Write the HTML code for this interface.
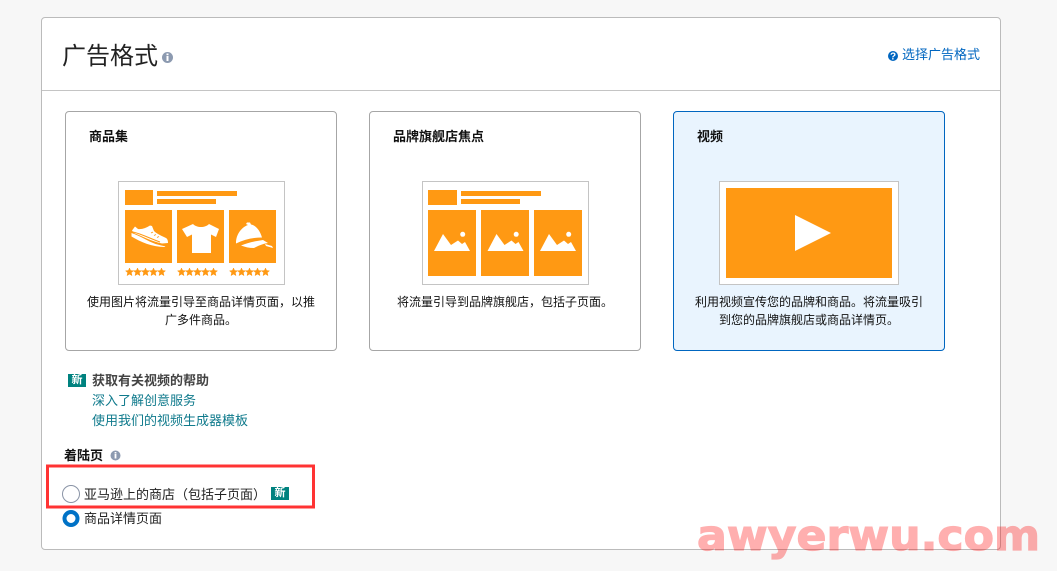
<!DOCTYPE html>
<html><head><meta charset="utf-8"><style>
html,body{margin:0;padding:0}
body{width:1057px;height:571px;background:#f7f7f7;position:relative;overflow:hidden;font-family:"Liberation Sans","Noto Sans CJK SC",sans-serif;color:#111;font-size:13px}
.a{position:absolute;white-space:nowrap}
.panel{left:41px;top:17px;width:958px;height:531px;background:#fff;border:1px solid #bbb;border-radius:4px}
.hr{left:42px;top:90px;width:958px;height:1px;background:#c4c4c4}
.card{top:111px;width:270px;height:238px;background:#fff;border:1px solid #a6a6a6;border-radius:4px}
.sel{background:#e9f4fe;border-color:#0066c0}
.t{font-weight:700;font-size:13px;line-height:18px;top:128px}
.d{font-size:12px;line-height:18px;text-align:center;width:260px}
.l{color:#0f7a8c;font-size:13px;line-height:18px;left:92px}
.new{background:#00827f;color:#fff;font-size:11px;font-weight:700;line-height:13px;height:13px;width:18px;text-align:center}
svg{position:absolute;left:0;top:0}
</style></head><body>
<div class="a panel"></div>
<div class="a hr"></div>
<div class="a" style="left:62px;top:40px;font-size:24px;line-height:34px;color:#222">广告格式</div>
<div class="a" style="left:902px;top:46px;font-size:13px;line-height:18px;color:#0066c0">选择广告格式</div>
<div class="a card" style="left:65px"></div>
<div class="a card" style="left:369px"></div>
<div class="a card sel" style="left:673px"></div>
<div class="a t" style="left:89px">商品集</div>
<div class="a t" style="left:393px">品牌旗舰店焦点</div>
<div class="a t" style="left:697px">视频</div>
<div class="a d" style="left:71px;top:293px">使用图片将流量引导至商品详情页面，以推<br>广多件商品。</div>
<div class="a d" style="left:375px;top:293px">将流量引导到品牌旗舰店，包括子页面。</div>
<div class="a d" style="left:679px;top:293px">利用视频宣传您的品牌和商品。将流量吸引<br>到您的品牌旗舰店或商品详情页。</div>
<div class="a new" style="left:68px;top:374px">新</div>
<div class="a" style="left:92px;top:372px;font-size:13px;line-height:18px;font-weight:700;color:#444">获取有关视频的帮助</div>
<div class="a l" style="top:392px">深入了解创意服务</div>
<div class="a l" style="top:412px">使用我们的视频生成器模板</div>
<div class="a" style="left:64px;top:447px;font-size:13px;line-height:18px;font-weight:700">着陆页</div>
<div class="a" style="left:84px;top:486px;font-size:13px;line-height:18px;color:#222">亚马逊上的商店（包括子页面）</div>
<div class="a new" style="left:271px;top:487px">新</div>
<div class="a" style="left:84px;top:510px;font-size:13px;line-height:18px;color:#222">商品详情页面</div>
<svg width="1057" height="571" viewBox="0 0 1057 571">
<g fill="#8c9ab0">
<circle cx="167.500" cy="57.500" r="5.500"/><circle cx="115.500" cy="455.500" r="5"/>
</g>
<g fill="#fff"><rect x="166.500" y="56" width="2" height="5"/><rect x="166.500" y="53.500" width="2" height="1.700"/><rect x="114.600" y="454" width="1.800" height="4.500"/><rect x="114.600" y="452" width="1.800" height="1.500"/></g>
<circle cx="893" cy="56" r="5" fill="#0066c0"/>
<text x="893" y="59.500" font-size="10" font-weight="700" fill="#fff" text-anchor="middle" font-family="Liberation Sans">?</text>
<g fill="#fff" stroke="#c4c4c4"><rect x="118.500" y="181.500" width="166" height="103"/><rect x="422.500" y="181.500" width="166" height="103"/><rect x="719.500" y="181.500" width="179" height="103"/></g>
<g fill="#ff9913">
<rect x="125" y="190" width="28" height="15"/><rect x="157" y="191" width="80" height="5"/><rect x="157" y="199" width="59" height="5"/>
<rect x="125" y="210" width="47" height="53"/><rect x="177" y="210" width="47" height="53"/><rect x="229" y="210" width="47" height="53"/>
<rect x="428" y="190" width="29" height="15"/><rect x="461" y="191" width="80" height="5"/><rect x="461" y="199" width="59" height="5"/>
<rect x="428" y="210" width="48" height="66"/><rect x="481" y="210" width="48" height="66"/><rect x="534" y="210" width="48" height="66"/>
<rect x="726" y="188" width="166" height="90"/>
</g>
<path d="M795 215l36 18-36 18z" fill="#fff"/>
<defs><g id="m"><path d="M0 19L9 2l8 11 7-4.500 4 3.500 3-2 5 9z" fill="#fff"/><circle cx="28.700" cy="2.300" r="2.500" fill="#fff"/></g>
<path id="s" d="M3.500-.5l1.100 2.500 2.900.3-2.200 1.900.7 2.900-2.500-1.500-2.500 1.500.7-2.900L-.5 2.300l2.900-.3z" fill="#ff9913" stroke="#ff9913" stroke-width=".5"/>
<g id="r"><use href="#s"/><use href="#s" x="8"/><use href="#s" x="16"/><use href="#s" x="24"/><use href="#s" x="32"/></g></defs>
<use href="#m" x="434" y="232"/><use href="#m" x="487.500" y="232"/><use href="#m" x="540" y="232"/>
<use href="#r" x="126" y="268.500"/><use href="#r" x="178" y="268.500"/><use href="#r" x="230" y="268.500"/>
<path d="M135 226.500l3 2.500c4 .5 8-1 12-3.500l2 .5 2 5c3 3 8 5 12 7 1.500 1 2 2.500 2 5l-6 .5c-10-2-19-7-28-10.500l-2-2.500z" fill="#fff"/>
<path d="M131.500 233c9 3 16 8 24 11 4 1 8 2 10 2.500l-1 .5c-12 0-24-5-33-10.500z" fill="#fff"/>
<path d="M133 232c9 2 18 7 27 10" fill="none" stroke="#ff9913" stroke-width="1"/>
<path d="M153 232l-2 1M156 234.500l-2 1M159 236.500l-2 1" stroke="#ff9913" stroke-width=".8" fill="none"/>
<path d="M193 224c2 2 5 3 8 3s6-1 8-3l10 5-3 8-5-2.500V253h-19v-18.500l-5 2.500-5-8z" fill="#fff"/>
<path d="M236 243c0-9 6-16 12-18l-2-1 1-1.500h3l1 2c5 1 9 6 11 13-9 0-18 2-26 6z" fill="#fff"/>
<path d="M241 245.500c7-3 15-4.500 22-5.500l5 3c-6 1-10 3-14 5-5 0-9-1-13-2.500zM265 244l7 2 1 2-7-2z" fill="#fff"/>
<rect x="47.500" y="466" width="266" height="41" fill="none" stroke="#ff3333" stroke-width="3"/>
<circle cx="71" cy="494" r="8.500" fill="#fff" stroke="#8a94a6" stroke-width="1"/>
<circle cx="71" cy="518.500" r="6.500" fill="#fff" stroke="#0072c6" stroke-width="4"/>
<text x="697" y="550" font-family="DejaVu Sans" font-weight="700" font-size="42" fill="#ff0000" stroke="#ff0000" stroke-width="1.200" opacity=".31" textLength="343" lengthAdjust="spacingAndGlyphs">awyerwu.com</text>
</svg>
</body></html>
